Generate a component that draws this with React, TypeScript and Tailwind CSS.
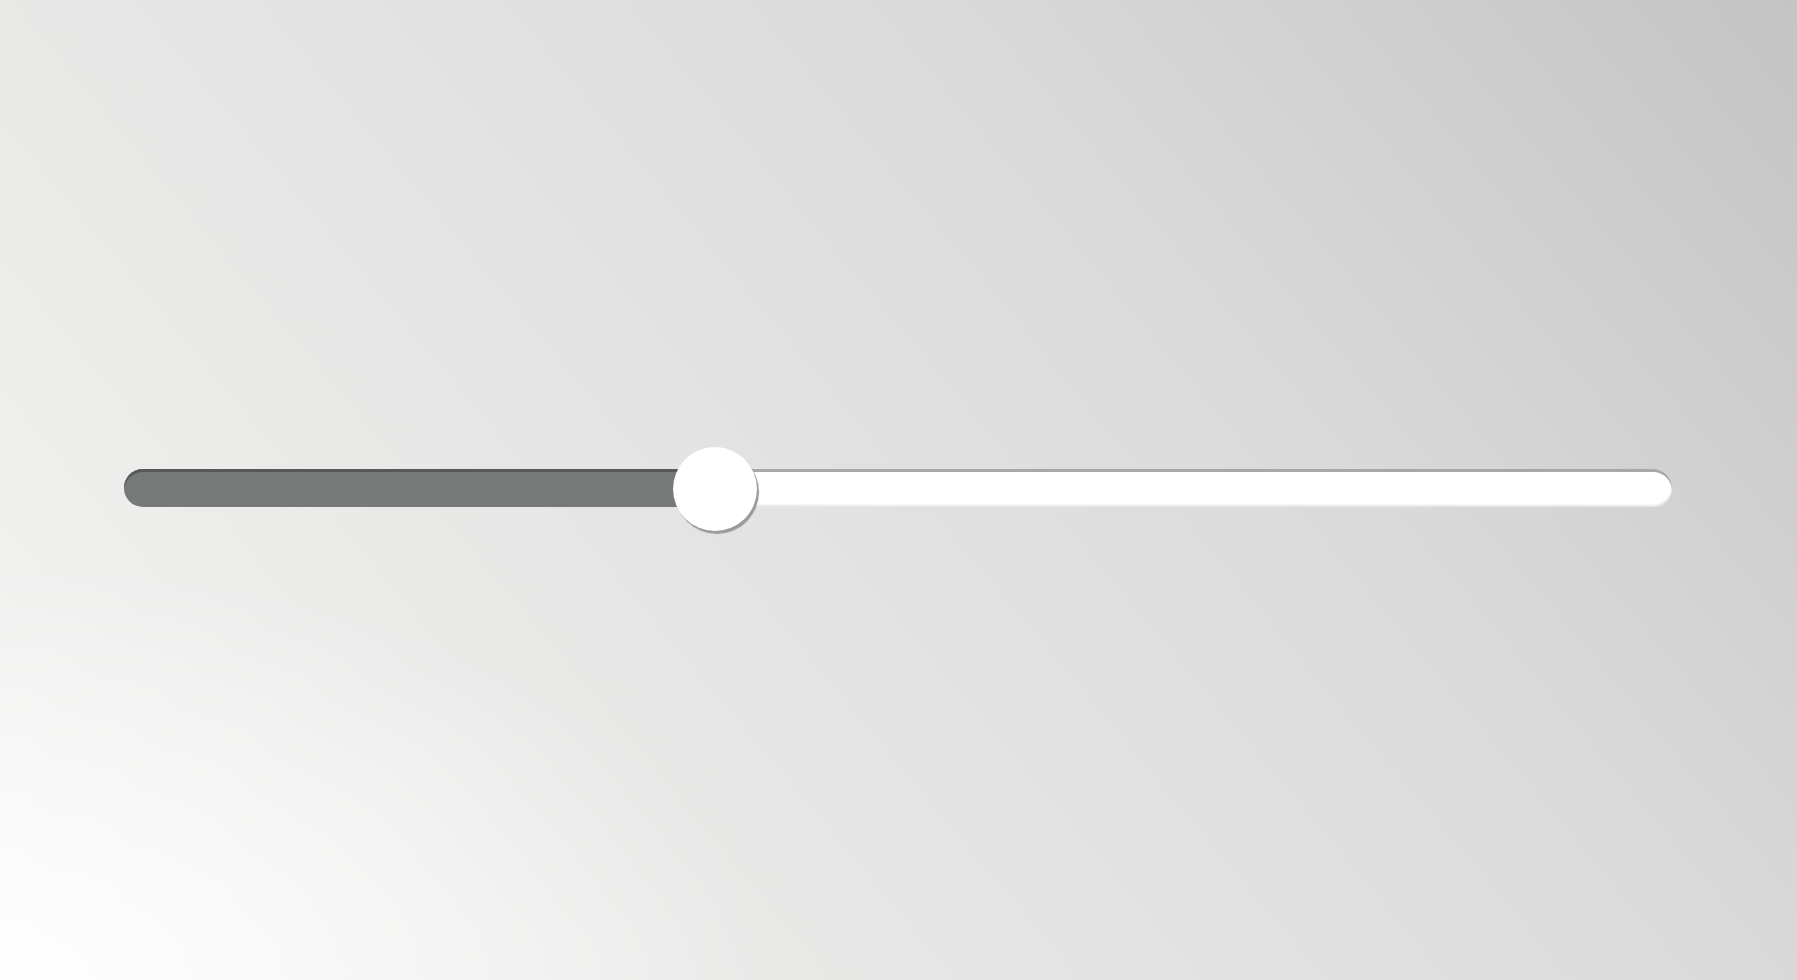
import React, { useState } from 'react';

const Slider = ({ value }: { value: number }) => {
  const pct = `${value}%`;
  return (
    <div className="relative h-[38px] w-full rounded-full bg-white shadow-[inset_0_3px_0_#a7a9a8,inset_0_-2px_2px_#e6e6e6]">
      {/* filled part */}
      <div
        className="absolute left-0 top-0 h-full rounded-l-full bg-[#757978] shadow-[inset_0_3px_0_#565958]"
        style={{ width: pct }}
      />
      {/* handle */}
      <div
        className="absolute top-[-22px] h-[84px] w-[84px] -translate-x-1/2 rounded-full bg-white shadow-[2px_3px_1px_#999b9a]"
        style={{ left: pct }}
      />
    </div>
  );
};

export default function App() {
  const [value] = useState(38.2);

  return (
    <div className="h-screen w-full overflow-hidden bg-[radial-gradient(ellipse_at_bottom_left,rgba(255,255,255,0.9)_0%,rgba(255,255,255,0)_30%),linear-gradient(50deg,#f6f6f5_0%,#e8e8e7_32%,#d9dad9_67%,#c3c5c4_100%)] pl-[124px] pr-[125px] pt-[469px]">
      <Slider value={value} />
    </div>
  );
}
